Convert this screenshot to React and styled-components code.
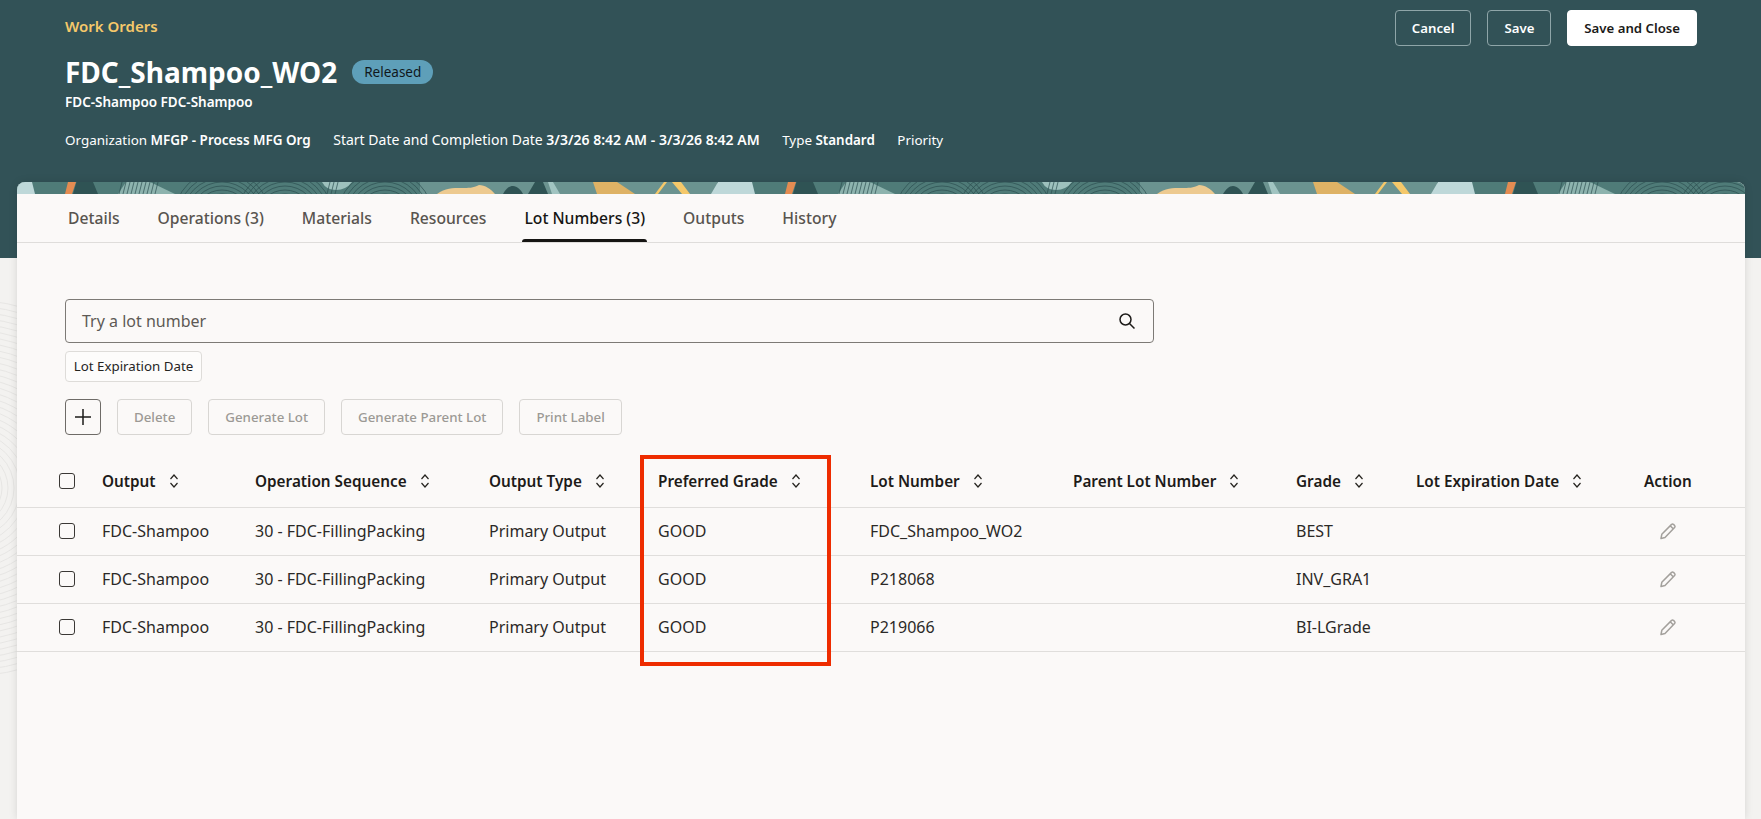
import React from "react";
import styled, { createGlobalStyle } from "styled-components";

const Global = createGlobalStyle`
  html, body { margin: 0; padding: 0; height: 100%; overflow: hidden; background: #f3f2f0; }
  body { font-family: "Noto Sans", "Open Sans", sans-serif; color: #262423; }
  * { box-sizing: border-box; }
`;

const Page = styled.div`height: 819px; overflow: hidden; position: relative;`;
const GutterArt = styled.svg`position: absolute; left: 0; top: 258px; width: 17px; height: 561px;`;
const Header = styled.header`
  height: 258px; background: #325257; color: #fff; padding: 10px 64px 0 65px;
  display: flex; justify-content: space-between; align-items: flex-start;
`;
const Crumb = styled.div`
  color: #f5c86a; font-size: 15px; font-weight: 600; line-height: 20px; margin-top: 6px;
`;
const TitleRow = styled.div`display: flex; align-items: center; gap: 15px; margin-top: 16px;`;
const Title = styled.h1`margin: 0; font-size: 28px; font-weight: 700; line-height: 40px;`;
const Badge = styled.span`
  background: #5e9fb9; color: #10171b; font-size: 13.5px; line-height: 24px; height: 24px;
  border-radius: 12px; padding: 0 12px;
`;
const Sub = styled.div`font-size: 13.5px; font-weight: 600; line-height: 18px; margin-top: 1px;`;
const Meta = styled.div`display: flex; gap: 22.5px; margin-top: 20px; line-height: 18px;`;
const MetaItem = styled.span`font-size: ${p => p.$size}px; b { font-weight: 600; }`;
const Actions = styled.div`display: flex; gap: 16px;`;
const HeadBtn = styled.button`
  height: 36px; padding: 0 16px; border-radius: 4px; font: 600 13.2px "Noto Sans", sans-serif;
  background: ${p => p.$solid ? "#fff" : "transparent"};
  color: ${p => p.$solid ? "#1b1a18" : "#fff"};
  border: 1px solid ${p => p.$solid ? "#fff" : "#8fa5a8"};
`;
const Card = styled.main`
  position: relative; margin: -76px 16px 0 17px; height: 637px; background: #fbf9f8;
  border-radius: 8px 8px 0 0; overflow: hidden; box-shadow: 0 0 8px rgba(0, 0, 0, 0.12);
`;
const Shell = styled.div`position: relative;`;
const BandArt = styled.svg`display: block; width: 100%; height: 12px;`;
const Tabs = styled.nav`
  display: flex; height: 49px; padding-left: 49px; gap: 34px; border-bottom: 1px solid #dfdddb;
`;
const Tab = styled.div`
  padding: 0 2px; height: 48px; line-height: 48px; font-size: 15.68px; font-weight: 500; position: relative;
  color: ${p => p.$active ? "#161513" : "#58544f"};
  ${p => p.$active ? `&::after { content: ""; position: absolute; left: 0; right: 0; bottom: 0; height: 3px; background: #161513; border-radius: 3px 3px 0 0; }` : ""}
`;
const Body = styled.div`padding: 56px 0 0;`;
const Search = styled.div`
  margin-left: 48px; width: 1089px; height: 44px; border: 1px solid #7d7a76; border-radius: 4px;
  display: flex; align-items: center; justify-content: space-between; padding: 0 17px 0 16px;
  font-size: 16px; color: #5e5a55;
`;
const Chip = styled.div`
  margin: 8px 0 0 48px; width: 137px; height: 31px; border: 1px solid #dedcd9; border-radius: 4px;
  font-size: 13.3px; line-height: 29px; text-align: center; color: #26241f; background: #fdfcfb;
`;
const Toolbar = styled.div`display: flex; gap: 16px; margin: 17px 0 0 48px;`;
const PlusBtn = styled.div`
  width: 36px; height: 36px; border: 1px solid #6e6b67; border-radius: 4px;
  display: flex; align-items: center; justify-content: center;
`;
const ToolBtn = styled.div`
  height: 36px; padding: 0 16px; border: 1px solid #d8d6d3; border-radius: 4px;
  font-size: 13.3px; font-weight: 500; line-height: 34px; color: #9c9995;
`;
const Table = styled.div`margin-top: 20px;`;
const Row = styled.div`
  display: grid; grid-template-columns: 85px 153px 234px 169px 212px 203px 223px 120px 228px 1fr;
  align-items: center; height: ${p => p.$head ? "53px" : "48px"}; border-bottom: 1px solid #e0dedc;
  padding-bottom: 1px;
  font-size: ${p => p.$head ? "15.3px" : "16px"}; font-weight: ${p => p.$head ? 600 : 400};
  color: ${p => p.$head ? "#1d1b19" : "#2b2927"};
`;
const CheckCell = styled.div`padding-left: 42px; display: flex;`;
const Check = styled.span`
  width: 16px; height: 16px; border: 1.5px solid #3a3835; border-radius: 3px; display: block;
`;
const Cell = styled.div`display: flex; align-items: center; gap: 12px; white-space: nowrap;`;
const PencilWrap = styled.div`display: flex; padding-left: 15px;`;
const Highlight = styled.div`
  position: absolute; left: 623px; top: 273px; width: 191px; height: 211px;
  border: 4.5px solid #ee2c00; pointer-events: none;
`;

const Sort = () => (
  <svg width="12" height="16" viewBox="0 0 12 16" fill="none" stroke="#26241f" strokeWidth="1.2">
    <path d="M2.5 6 6 2l3.5 4M2.5 10 6 14l3.5-4" />
  </svg>
);
const Pencil = () => (
  <svg width="18" height="18" viewBox="0 0 18 18" fill="none" stroke="#a3a09c" strokeWidth="1.5" strokeLinejoin="round">
    <path d="M2 16.5l.8-4.2L12.6 2.4a1.3 1.3 0 0 1 1.9 0l1.1 1.1a1.3 1.3 0 0 1 0 1.9L6 15.5zM11.2 3.8l3 3" />
  </svg>
);
const SearchIcon = () => (
  <svg width="18" height="18" viewBox="0 0 18 18" fill="none" stroke="#1d1b19" strokeWidth="1.5">
    <circle cx="7.5" cy="7.5" r="5.5" /><path d="m11.5 11.5 5 5" />
  </svg>
);
const Plus = () => (
  <svg width="20" height="20" viewBox="0 0 20 20" stroke="#1d1b19" strokeWidth="1.5"><path d="M10 2v16M2 10h16" /></svg>
);

const radii = [20, 24, 28, 32, 36, 40, 44, 48];
const arcCentres = [222, 285, 385];
const hatch = [122, 126, 130, 134, 138, 142, 146, 150, 154, 158, 330, 334, 338];

const Tile = ({ x }) => (
  <g transform={`translate(${x})`}>
    <path d="M420 0h297v12H420z" fill="#6b9390" />
    <path d="M118 12l8-12h24l25 12z" fill="#8db3ae" />
    <path d="M322 0h30q-6 8-16 8t-14-8z" fill="#9dc1bd" />
    <g fill="none" stroke="#2c4f50" strokeWidth="0.7">
      {arcCentres.map(c => radii.map(r => <circle key={c + "-" + r} cx={c} cy={36} r={r} />))}
      {hatch.map(h => <path key={h} d={`M${h} 0l-3 12`} />)}
    </g>
    <path d="M65 12l3-12h8l-4 12z" fill="#e48c52" />
    <path d="M73 12l3.5-12H93l5 12z" fill="#2f5354" />
    <path d="M437 12c8-6 16-6 24-6s12 0 18-3c6 0 12 4 16 9z" fill="#edca90" />
    <path d="M503 12c3-5 6-8 10-8s8 4 10 8z" fill="#2f5354" />
    <path d="M528 12l7-12h8l5 12z" fill="#2f5354" />
    <path d="M548 0h5l7 12h-8z" fill="#a1c4c1" />
    <path d="M593 0h24l18 12h-38z" fill="#deb265" />
    <path d="M655 12l9-12h3l-9 12z" fill="#f5c86a" />
    <path d="M672 0h9l9 12h-8z" fill="#f5c86a" />
    <path d="M718 0h34l3 12h-44z" fill="#bed8d9" />
  </g>
);

const Band = () => (
  <BandArt viewBox="0 0 1728 12" preserveAspectRatio="none">
    <rect width="1728" height="12" fill="#4f7b78" />
    <g transform="translate(-17)">
      {[-720, 0, 720, 1440].map(x => <Tile key={x} x={x} />)}
    </g>
  </BandArt>
);

const gutterRadii = Array.from({ length: 30 }, (_, i) => 14 + i * 6);

const heads = ["Output", "Operation Sequence", "Output Type", "Preferred Grade", "Lot Number", "Parent Lot Number", "Grade", "Lot Expiration Date"];
const rows = [
  ["FDC_Shampoo_WO2", "BEST"],
  ["P218068", "INV_GRA1"],
  ["P219066", "BI-LGrade"],
];

export default function App() {
  return (
    <Page>
      <Global />
      <GutterArt viewBox="0 0 17 561">
        <g fill="none" stroke="#e7e6e4" strokeWidth="1">
          {gutterRadii.map(r => <circle key={r} cx={-30} cy={230} r={r} />)}
        </g>
      </GutterArt>
      <Shell>
        <Header>
          <div>
            <Crumb>Work Orders</Crumb>
            <TitleRow><Title>FDC_Shampoo_WO2</Title><Badge>Released</Badge></TitleRow>
            <Sub>FDC-Shampoo FDC-Shampoo</Sub>
            <Meta>
              <MetaItem $size={13.45}>Organization <b>MFGP - Process MFG Org</b></MetaItem>
              <MetaItem $size={14}>Start Date and Completion Date <b>3/3/26 8:42 AM - 3/3/26 8:42 AM</b></MetaItem>
              <MetaItem $size={13.4}>Type <b>Standard</b></MetaItem>
              <MetaItem $size={13.4}>Priority</MetaItem>
            </Meta>
          </div>
          <Actions>
            <HeadBtn>Cancel</HeadBtn>
            <HeadBtn>Save</HeadBtn>
            <HeadBtn $solid>Save and Close</HeadBtn>
          </Actions>
        </Header>
        <Card>
          <Band />
          <Tabs>
            {["Details", "Operations (3)", "Materials", "Resources", "Lot Numbers (3)", "Outputs", "History"].map(t => (
              <Tab key={t} $active={t.startsWith("Lot")}>{t}</Tab>
            ))}
          </Tabs>
          <Body>
            <Search>Try a lot number<SearchIcon /></Search>
            <Chip>Lot Expiration Date</Chip>
            <Toolbar>
              <PlusBtn><Plus /></PlusBtn>
              {["Delete", "Generate Lot", "Generate Parent Lot", "Print Label"].map(t => <ToolBtn key={t}>{t}</ToolBtn>)}
            </Toolbar>
            <Table>
              <Row $head>
                <CheckCell><Check /></CheckCell>
                {heads.map(h => <Cell key={h}>{h}<Sort /></Cell>)}
                <Cell>Action</Cell>
              </Row>
              {rows.map(r => (
                <Row key={r[0]}>
                  <CheckCell><Check /></CheckCell>
                  <Cell>FDC-Shampoo</Cell>
                  <Cell>30 - FDC-FillingPacking</Cell>
                  <Cell>Primary Output</Cell>
                  <Cell>GOOD</Cell>
                  <Cell>{r[0]}</Cell>
                  <Cell />
                  <Cell>{r[1]}</Cell>
                  <Cell />
                  <PencilWrap><Pencil /></PencilWrap>
                </Row>
              ))}
            </Table>
          </Body>
          <Highlight />
        </Card>
      </Shell>
    </Page>
  );
}
